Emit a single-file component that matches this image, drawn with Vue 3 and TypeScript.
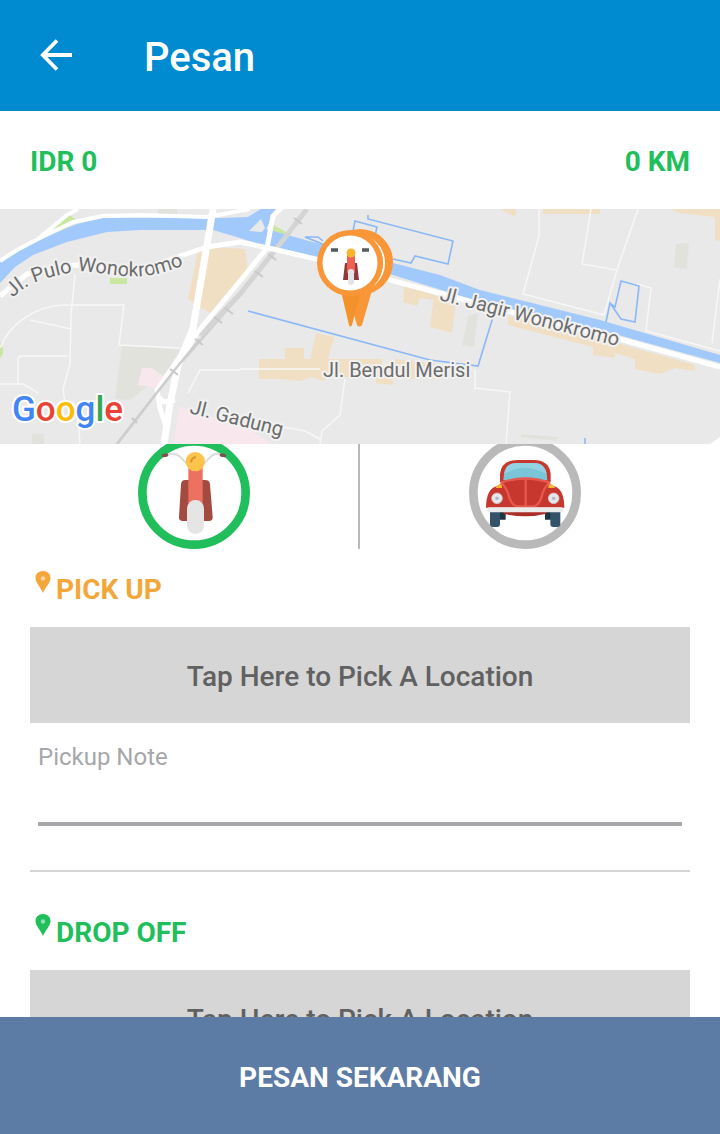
<script setup lang="ts">
import { ref } from 'vue'

type Vehicle = 'bike' | 'car'

interface Stop {
  id: string
  title: string
  noteLabel?: string
}

const vehicle = ref<Vehicle>('bike')
const price = ref(0)
const distance = ref(0)
const notes = ref<Record<string, string>>({ pickup: '', dropoff: '' })

const stops: Stop[] = [
  { id: 'pickup', title: 'PICK UP', noteLabel: 'Pickup Note' },
  { id: 'dropoff', title: 'DROP OFF' },
]
</script>

<template>
  <div class="screen">
    <header class="bar">
      <button class="back" type="button" aria-label="Back">
        <svg viewBox="0 0 32 32" width="32" height="32" aria-hidden="true">
          <path d="M17 1.500 2.800 16 17 30.500M3 16h29" fill="none" stroke="#fff" stroke-width="3.800" />
        </svg>
      </button>
      <h1>Pesan</h1>
    </header>

    <div class="summary">
      <span>IDR {{ price }}</span>
      <span>{{ distance }} KM</span>
    </div>

    <svg class="map" viewBox="0 0 720 235" preserveAspectRatio="xMidYMid slice" role="img" aria-label="Map">
      <defs>
        <path id="pulo" d="M13 89C25 75 44 68 80 62C104 64 125 69 145 67C162 65 178 59 200 50" />
        <path id="jagir" d="M439 91L640 143" />
        <path id="gadung" d="M189 204L300 232" />
      </defs>
      <rect width="720" height="235" fill="#e9e9e9" />

      <g fill="#e2e2dd">
        <path d="M122 136L180 141L166 163L130 191L115 190Z" />
        <path d="M158 0h19v6h-19zM676 35l13 -1l-2 26l-13 -2zM468 107l10 -3l-4 34l-12 -2zM32 225h12v10H32zM521 225l36 3v4l-36-4z" />
      </g>
      <g fill="#f1dfc4">
        <path d="M199 37L245 40L248 63L213 106L188 90Z" />
        <path d="M259 150h26v-11h19v11h6l6-26l18 4l-6 22h54v18h-50l-10 4l-10-4l-12 4l-20-2h-21z" />
        <path d="M376 168h17v8l-17-2zM404 77l30 5v9l-14 -2l-3 8l-14-4zM434 86l22 8l-4 30l-22-6z" />
        <path d="M395 150l48 6v14h-50z" />
        <path d="M508 107l60 14l45 12l82 23v6l-20-3l-15 6l-25-5v-10l-20-6v5l-22-3v-8l-85-22z" />
        <path d="M543 0h57v5h-57zM500 0h16v8zM670 0h50v32l-5-1V8l-35-4z" />
      </g>
      <path d="M142 159h10l13 10l-7 10l-20-3zM179 197L245 218L272 235H174Z" fill="#f8e8ee" />
      <path d="M44 28L68 5L78 12L65 20ZM270 14L286 23L282 28L272 26ZM270 10L281 0H273ZM110 69h17v6h-17zM0 133l3 6v6l-3 4z" fill="#c9e7a1" />

      <g fill="none" stroke="#f7f7f7" stroke-width="1.500">
        <path d="M75 65L71 106L70 155L63 180L65 194L77 198L80 235M0 139C10 114 35 98 62 96L124 96L119 136L180 139M30 111L71 120M18 174V151Q18 147 22 147H68M0 175H23L38 184M188 184L200 161H240M240 160H320M345 170L340 206L322 222L320 235M240 210L305 222L320 230" />
        <path d="M539 0V27L523 85L604 106L617 61L582 55L591 0M638 0L617 61M637 75L651 79L646 122L720 142M720 70L712 134M475 179L510 183L506 235M475 160V180" />
      </g>
      <path d="M720 228L710 235H720Z" fill="#fff" />

      <path d="M0 50L43 29L77 15L103 9H222L248 8L261 0H278L270 13L266 20L320 35L393 54L440 66L480 81L600 111L720 146V154L600 121L480 93L393 66L320 49L267 38L240 29L213 21H140L107 23L67 33L33 46L15 58L0 74Z" fill="#a1c9fb" />
      <path d="M249 22L261 10L265 19L262 23Z" fill="#e9e9e9" />
      <g fill="none" stroke="#8ab8f6" stroke-width="1.600">
        <path d="M368 6V10L453 32L448 55L415 47L411 54L393 50M353 22L355 12L377 18L375 27M325 36L305 28L318 28L323 32" />
        <path d="M248 102L430 151L478 157L493 108M606 113L610 94L621 110L635 113L639 77L621 72L615 98L610 94M585 229V235" />
      </g>

      <path d="M117 235L173 163L240 86" fill="none" stroke="#cecece" stroke-width="2.500" />
      <path d="M200 127L240 85L280 35L307 0" fill="none" stroke="#d4d4d4" stroke-width="5" />
      <g fill="none" stroke="#fff" stroke-linejoin="round">
        <path d="M0 52L17 41L40 29L73 13L103 7L140 6L207 8M38 30L67 6L78 0M207 8L250 0" stroke-width="4" />
        <path d="M0 87L27 65L75 56L145 60L183 46L207 38L240 33L273 40L320 51L390 71L480 95L623 131L720 158" stroke-width="5" />
        <path d="M213 0L207 36L193 119L178 156L170 195L164 235" stroke-width="7" />
        <path d="M282 -2L273 7L267 39L240 72L197 124L180 152M180 148L157 181L160 199L167 221M158 188L164 193L175 191" stroke-width="5" />
      </g>
      <path d="M117 235L173 163L200 130" fill="none" stroke="#cecece" stroke-width="2.500" />
      <path d="M170 160l8 6M195 130l8 6M214 108l8 6M225 99l8 6M255 62l8 6M268 45l8 6M294 9l8 6M132 209l5 5" stroke="#c9c9c9" stroke-width="2" />

      <g class="streets">
        <text><textPath href="#pulo">Jl. Pulo Wonokromo</textPath></text>
        <text><textPath href="#jagir">Jl. Jagir Wonokromo</textPath></text>
        <text><textPath href="#gadung">Jl. Gadung</textPath></text>
        <text x="323" y="168">Jl. Bendul Merisi</text>
      </g>

      <text class="brand" x="12" y="212"><tspan fill="#4285f4">G</tspan><tspan fill="#ea4335">o</tspan><tspan fill="#fbbc05">o</tspan><tspan fill="#4285f4">g</tspan><tspan fill="#34a853">l</tspan><tspan fill="#ea4335">e</tspan></text>

      <g fill="#f99637">
        <path d="M346 78L357 116Q359 119 362 116L373 78Z" />
        <circle cx="360" cy="53" r="33" />
        <circle cx="356" cy="54" r="28" fill="none" stroke="#fff" stroke-width="2" />
        <path d="M340 78L349 116Q350 119 352 116L362 78Z" fill="#f3922b" />
        <circle cx="350" cy="54" r="33" />
        <circle cx="350" cy="54" r="27.500" fill="#fff" />
      </g>
      <path d="M331 41h7M362 41h7" stroke="#56595d" stroke-width="3.500" />
      <path d="M345 54h12l2 17h-16z" fill="#91383b" />
      <path d="M347 46h8v18h-8z" fill="#ee6254" />
      <circle cx="351" cy="44" r="4.500" fill="#f6b52e" />
      <rect x="348" y="60" width="6" height="16" rx="3" fill="#e2e5e8" />
    </svg>

    <main class="content">
      <fieldset class="vehicles">
        <label class="vehicle">
          <input v-model="vehicle" type="radio" name="vehicle" value="bike" aria-label="Motorcycle" />
          <svg viewBox="0 0 336 336" aria-hidden="true">
            <circle class="ring" cx="168" cy="168" r="155" />
            <g fill="none" stroke-linecap="round">
              <path d="M84 54Q113 45 127 60L145 79M252 54Q230 45 217 60L199 79" stroke="#dedede" stroke-width="6" />
              <path d="M76 56l10-2M250 54l10 2" stroke="#7c5350" stroke-width="10" />
            </g>
            <path d="M142 129H201Q215 129 216 142L224 240Q225 252 213 252H134Q122 252 123 240L129 142Q130 129 142 129Z" fill="#a34b40" />
            <path d="M151 90H194V220H151Z" fill="#ed7161" />
            <circle cx="172" cy="74" r="29" fill="#fcc44c" />
            <path d="M159 76Q160 62 174 61" fill="none" stroke="#d9942a" stroke-width="6" />
            <rect x="147" y="189" width="51" height="102" rx="25" fill="#e5e5e5" />
          </svg>
        </label>
        <label class="vehicle">
          <input v-model="vehicle" type="radio" name="vehicle" value="car" aria-label="Car" />
          <svg viewBox="0 0 336 336" aria-hidden="true">
            <circle class="ring" cx="168" cy="168" r="155" />
            <path d="M86 222h24v26H86zM228 222h24v26h-24z" fill="#1d3443" />
            <rect x="63" y="214" width="30" height="56" rx="9" fill="#34536a" />
            <rect x="244" y="214" width="30" height="56" rx="9" fill="#34536a" />
            <path d="M104 222H232V230Q168 246 104 230Z" fill="#a92f28" />
            <path d="M93 136V110Q98 69 145 69H193Q240 69 245 110V136Z" fill="#c8372d" />
            <path d="M103 130Q105 78 143 78H195Q233 78 235 130Z" fill="#7bc5d8" />
            <path d="M105 112Q168 73 233 112Q228 78 195 78H143Q109 78 105 112Z" fill="#92d2e2" />
            <path d="M51 212Q52 150 88 147Q100 127 168 123Q238 127 250 147Q285 150 286 212Z" fill="#c8372d" />
            <path d="M96 137Q168 112 242 137M96 137Q113 151 120 178Q127 204 143 208H195Q211 204 218 178Q225 151 242 137M170 126V208" fill="none" stroke="#e7584d" stroke-width="7" />
            <path d="M80 153Q82 142 98 142L99 153ZM239 142Q256 142 258 153H238Z" fill="#f7b336" />
            <g fill="#e4e7ea" stroke="#cdd1d5" stroke-width="2">
              <circle cx="84" cy="184" r="16" />
              <circle cx="254" cy="184" r="16" />
            </g>
            <circle cx="84" cy="184" r="5" fill="#aeb6c4" />
            <circle cx="254" cy="184" r="5" fill="#aeb6c4" />
            <rect x="55" y="211" width="228" height="15" rx="6" fill="#ececec" />
          </svg>
        </label>
      </fieldset>

      <section v-for="stop in stops" :key="stop.id" class="stop" :class="stop.id">
        <h2>
          <svg viewBox="0 0 26 24" width="26" height="24" aria-hidden="true">
            <path d="M13 2C8.500 2 5.500 5 5.500 9C5.500 14 10 17 13 24C16 17 20.500 14 20.500 9C20.500 5 17.500 2 13 2Z" fill="currentColor" />
            <circle cx="13" cy="9.500" r="2.200" fill="#fff" opacity="0.500" />
          </svg>
          {{ stop.title }}
        </h2>
        <button class="picker" type="button">Tap Here to Pick A Location</button>
        <div v-if="stop.noteLabel" class="note">
          <label :for="stop.id + '-note'">{{ stop.noteLabel }}</label>
          <input :id="stop.id + '-note'" v-model="notes[stop.id]" type="text" />
        </div>
      </section>
    </main>

    <button class="order" type="button">PESAN SEKARANG</button>
  </div>
</template>

<style>
body {
  margin: 0;
}
</style>

<style scoped>
.screen {
  display: flex;
  flex-direction: column;
  height: 100vh;
  background: #fff;
  font-family: Roboto, "Noto Sans", sans-serif;
}

button {
  border: 0;
  font-family: inherit;
  cursor: pointer;
}

.bar {
  box-sizing: border-box;
  display: flex;
  flex: none;
  align-items: center;
  gap: 72px;
  height: 111px;
  padding: 0 40px 2px;
  background: #008bd0;
  color: #fff;
}

.back {
  display: flex;
  padding: 0;
  background: none;
}

h1 {
  margin: 0;
  padding-top: 6px;
  font-size: 40px;
  font-weight: 500;
}

.summary {
  box-sizing: border-box;
  display: flex;
  flex: none;
  align-items: center;
  justify-content: space-between;
  height: 98px;
  padding: 2px 30px 0;
  color: #20bf5b;
  font-size: 28px;
  font-weight: 700;
}

.map {
  display: block;
  flex: none;
  width: 100%;
  height: 235px;
}

.streets {
  fill: #6c6c6c;
  stroke: #f1f1f1;
  stroke-width: 4px;
  stroke-linejoin: round;
  paint-order: stroke;
  font-size: 20px;
}

.brand {
  stroke: #fff;
  stroke-width: 4px;
  stroke-linejoin: round;
  paint-order: stroke;
  font-family: Roboto, sans-serif;
  font-size: 35px;
  font-weight: 500;
}

.content {
  flex: 1;
  min-height: 0;
  padding: 0 30px;
  overflow-y: auto;
  scrollbar-width: none;
}

.vehicles {
  display: grid;
  grid-template-columns: 1fr 1fr;
  margin: -7px 0 0;
  padding: 0;
  border: 0;
}

.vehicle {
  display: flex;
  justify-content: center;
  cursor: pointer;
}

.vehicle:first-child {
  border-right: 2px solid #b9b9b9;
}

.vehicle input {
  position: absolute;
  opacity: 0;
}

.vehicle svg {
  display: block;
  width: 112px;
  height: 112px;
}

.ring {
  fill: #fff;
  stroke: #b9b9b9;
  stroke-width: 26px;
}

.vehicle input:checked + svg .ring {
  stroke: #20bf5b;
}

.stop {
  padding-top: 20px;
}

.stop + .stop {
  margin-top: 44px;
  padding-top: 40px;
  border-top: 2px solid #d6d6d6;
}

h2 {
  display: flex;
  margin: 0 0 16px;
  font-size: 28px;
  font-weight: 700;
  line-height: 42px;
}

.pickup h2 {
  color: #f3a73b;
}

.dropoff h2 {
  color: #20bf5b;
}

.picker {
  display: block;
  width: 100%;
  height: 96px;
  padding: 2px 0 0;
  background: #d6d6d6;
  color: #616161;
  font-size: 28px;
  font-weight: 500;
}

.note {
  display: flex;
  flex-direction: column;
  padding: 18px 8px 0;
}

.note label {
  color: #a6a7aa;
  font-size: 24px;
  line-height: 32px;
}

.note input {
  box-sizing: border-box;
  height: 53px;
  padding: 0;
  border: 0;
  border-bottom: 4px solid #a6a7aa;
  outline: none;
  background: none;
  font-family: inherit;
  font-size: 24px;
}

.order {
  flex: none;
  height: 117px;
  padding: 4px 0 0;
  background: #5c7ba5;
  color: #fff;
  font-size: 28px;
  font-weight: 700;
}
</style>
